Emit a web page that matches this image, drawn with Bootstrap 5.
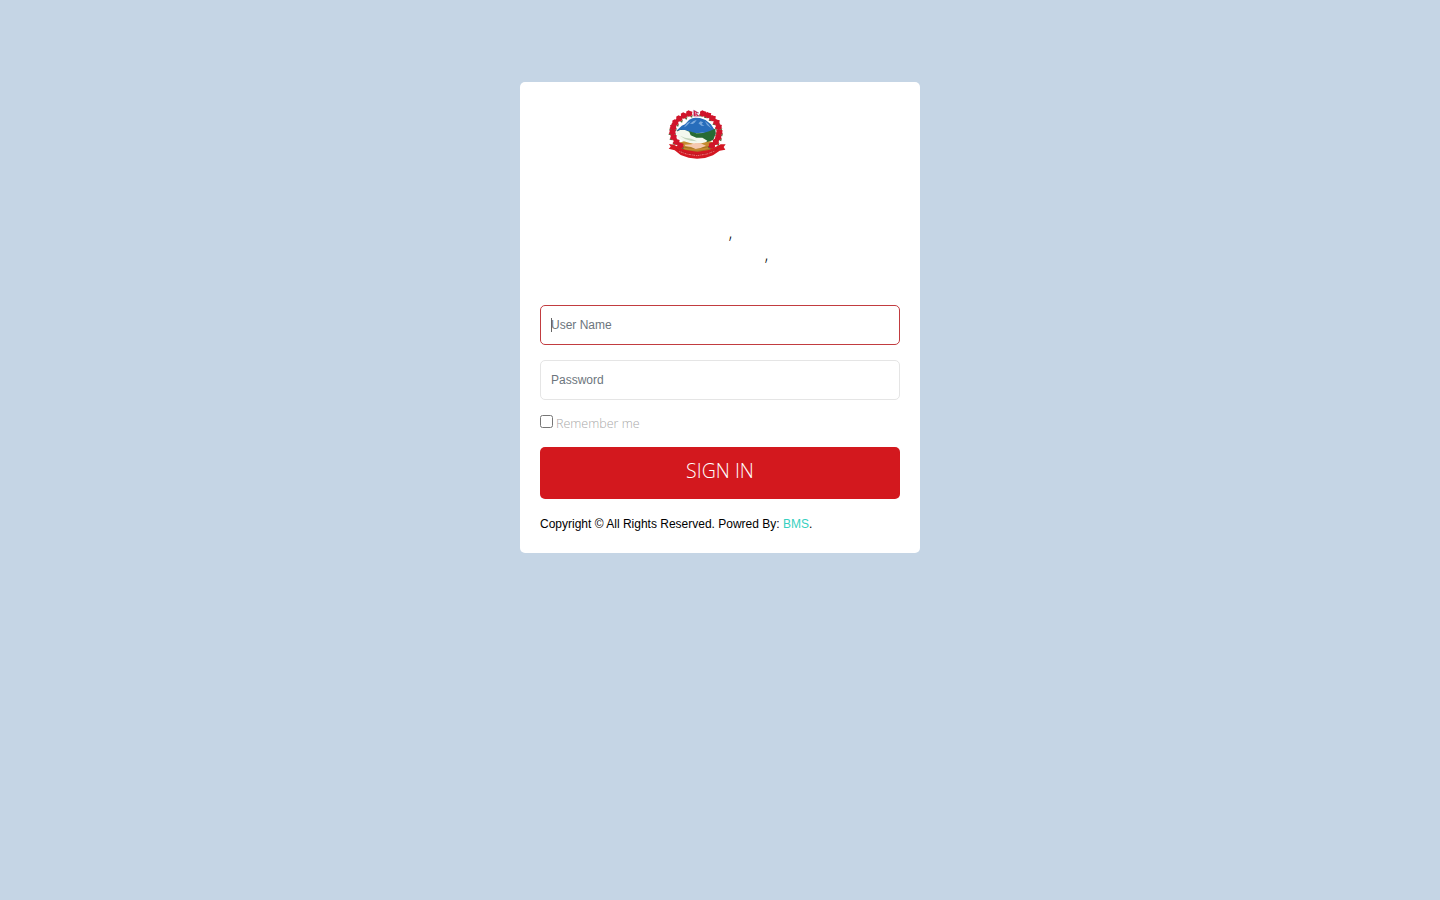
<!DOCTYPE html>
<html lang="en">
<head>
<meta charset="utf-8">
<meta name="viewport" content="width=device-width, initial-scale=1">
<title>Sign In</title>
<link href="https://cdn.jsdelivr.net/npm/bootstrap@5.3.0/dist/css/bootstrap.min.css" rel="stylesheet">
<style>
body{background:#c5d5e5;font:12px/20px "Liberation Sans",Arial,sans-serif;color:#000}
.login-box{width:400px;height:471px;margin-top:82px;border-radius:5px;padding:18px 20px 0}
.emblem{margin-left:120px;height:66px}
.office{margin-top:55px;height:84px;font:300 18px/22px "Open Sans",sans-serif;color:#000}
.office div:first-child{padding-left:188.6px}
.office div:last-child{padding-left:224.6px}
.login-box .form-control{height:40px;padding:0 10px;font-size:12px;border:1px solid #e5e5e5;border-radius:5px;box-shadow:none}
.login-box .form-control::placeholder{color:#6c757d}
.login-box .user-field{border-color:#c23c40}
.login-box .pass-field{margin-top:15px}
.caret-bar{left:11px;top:13px;width:1px;height:14px;background:#666}
.remember{margin-top:15px;height:32px;font:300 12.5px/18px "Open Sans",sans-serif;color:#aaa}
.remember input{width:13px;height:13px;margin:0 3px 0 0}
.sign-in{height:52px;padding:0 0 5px;border:0;border-radius:5px;background:#d3181e!important;font:300 19.5px/47px "Open Sans",sans-serif}
.copy-line{margin-top:15px}
.copy-line a{color:#36d0c0}
</style>
</head>
<body>
<main class="login-box bg-white mx-auto">
  <svg class="emblem d-block" width="76" height="66" viewBox="0 0 228 198" role="img" aria-label="Emblem">
    <defs>
      <g id="flower"><path d="M-11 7l5-6 4 8zM3 9l8-6-2 9z" fill="#55703f"/><path d="M-10 3l3-4-1-5 7-4 4 2 7 2-1 6 1 4-5 4-6 1z" fill="#d0142a"/></g>
    </defs>
    <g transform="translate(-6 0) scale(1.065 1)">
    <path d="M52 92l15-15 9-4 12-14 9-4 8-2 13 1 16 6 15 13 12 19-17 8-20-2-20 2-24-5z" fill="#276dbb"/>
    <path d="M73 82l9-13 10-5-7 9-6 6zM90 71l10-8 9-3-6 8-5 4zM114 70l6-6 7 3-4 5 8 6-9-1zM132 63l10 10 8 12-12-10z" fill="#79a9dc"/>
    <path d="M53 92l12-3 21 4 22 7 20-1 16-5 17-8 2 14-7 19-19 10-27-2-20-10-19-9-14-10z" fill="#286b34"/>
    <path d="M50 97l12-7 14 0 12 5 4 11 16 7 17 0 14 9-6 7-22 3-22-2-18-7-15-10z" fill="#f3f8ee"/>
    <path d="M62 107l14 6 18 3 16 8-18-2-16-5z" fill="#c3d5bb"/>
    <path d="M55 130l18-6 17 5 13 3 20-2 22-6 16 5-3 20-20 12-27 4-28-4-22-12z" fill="#c58b30"/>
    <path d="M62 139q48 13 94-3M68 148q42 12 83-2" fill="none" stroke="#93641d" stroke-width="2"/>
    <path d="M75 134l19-1 11-4 15 1 15 7-15 7-14 3-13-6-16-3z" fill="#f5c9b0"/>
    <use href="#flower" x="87" y="41"/><use href="#flower" x="72" y="47"/><use href="#flower" x="59" y="56"/>
    <use href="#flower" x="48" y="68"/><use href="#flower" x="42" y="82"/><use href="#flower" x="40" y="97"/>
    <use href="#flower" x="43" y="112"/><use href="#flower" x="51" y="126"/><use href="#flower" x="62" y="137"/>
    <use href="#flower" x="126" y="41"/><use href="#flower" x="140" y="46"/><use href="#flower" x="153" y="55"/>
    <use href="#flower" x="164" y="67"/><use href="#flower" x="170" y="81"/><use href="#flower" x="172" y="97"/>
    <use href="#flower" x="169" y="112"/><use href="#flower" x="162" y="126"/><use href="#flower" x="151" y="137"/>
    </g>
    <path d="M101 30l16 9-9 1 11 9h-18z" fill="#d31b48" stroke="#7c7198" stroke-width="1"/>
    <path d="M105 37l3 2-3 1M106 44l4 2-4 2" fill="none" stroke="#fff" stroke-width="1.5"/>
    <path d="M27 132l15 2 14 8 20 8 36 5 34-5 19-8 17-9 15 0-6 8 5 8-17 3-20 14-24 8-24 2-25-3-24-8-18-14-18-5 6-6z" fill="#d41722"/>
    <path d="M47 144l12 9 22 7 31 4 30-4 23-9 10-8" fill="none" stroke="#a51b24" stroke-width="1.5"/>
    <path d="M58 154l21 8 32 5 30-5 23-9" fill="none" stroke="#f08c8c" stroke-width="2.5" stroke-dasharray="3 2 5 3"/>
  </svg>
  <div class="office"><div>,</div><div>,</div></div>
  <form>
    <div class="position-relative"><input class="form-control user-field" type="text" placeholder="User Name" aria-label="User Name"><span class="caret-bar position-absolute"></span></div>
    <input class="form-control pass-field" type="password" placeholder="Password" aria-label="Password">
    <label class="remember d-flex align-items-start"><input type="checkbox"><span>Remember me</span></label>
    <button class="sign-in btn btn-danger w-100 d-block" type="button">SIGN IN</button>
  </form>
  <div class="copy-line">Copyright © All Rights Reserved. Powred By: <a class="text-decoration-none" href="#">BMS</a>.</div>
</main>
<script src="https://cdn.jsdelivr.net/npm/bootstrap@5.3.0/dist/js/bootstrap.bundle.min.js"></script>
</body>
</html>
